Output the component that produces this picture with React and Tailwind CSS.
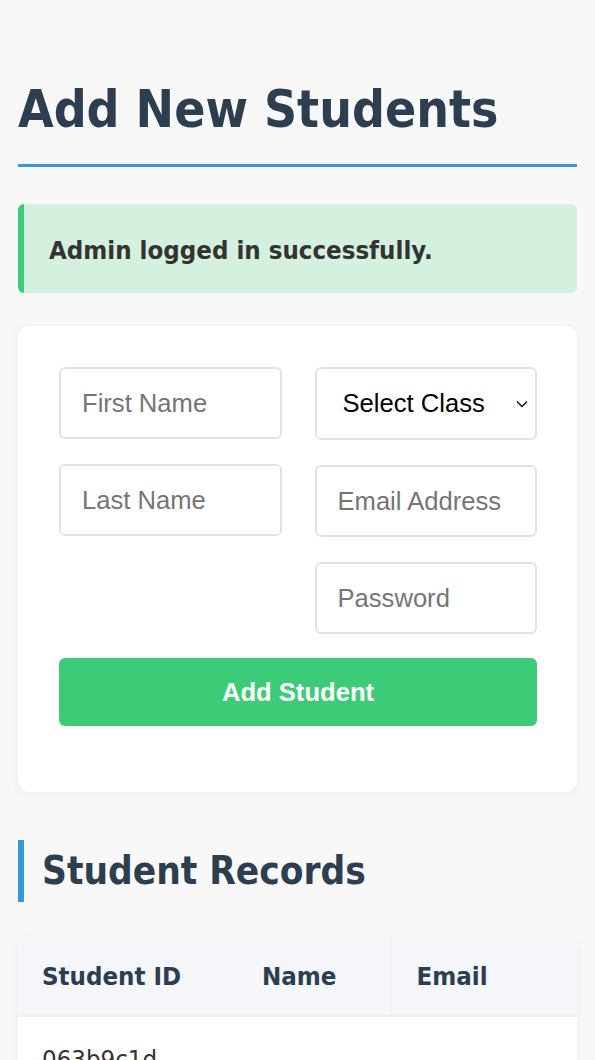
export default function App() {
  const head = "font-['DejaVu_Sans_Condensed','DejaVu_Sans',sans-serif]";
  const field =
    "w-full h-[72px] rounded-[6px] border-2 border-[#e3e3e3] bg-white pl-[21px] text-[25.6px] font-['Liberation_Sans',Arial,sans-serif] text-black placeholder:text-[#757575] outline-none";

  return (
    <div className={`min-h-screen bg-[#f8f8f8] px-[18px] pt-[79px] pb-10 ${head}`}>
      {/* 헤더 */}
      <h1 className="text-[51.2px] leading-[61px] font-bold text-[#2c3e50] pb-[24px] border-b-[3px] border-[#3498db]">
        Add New Students
      </h1>

      {/* 알림 */}
      <div className="mt-[37px] h-[89px] flex items-center pt-[3px] pl-[25px] rounded-[6px] border-l-[6px] border-[#3ccc78] bg-[#d4f0df]">
        <p className="text-[25.6px] font-bold text-[#333]">
          Admin logged in successfully.
        </p>
      </div>

      {/* 폼 */}
      <div className="mt-[33px] bg-white rounded-[12px] shadow-[0_2px_10px_rgba(0,0,0,0.06)] pt-[41px] pl-[41px] pr-[40px] pb-[66px]">
        <div className="grid grid-cols-2 gap-x-[33px] items-start">
          <div className="flex flex-col gap-[25px]">
            <input className={field} placeholder="First Name" />
            <input className={field} placeholder="Last Name" />
          </div>
          <div className="flex flex-col gap-[25px]">
            <div className="relative">
              <select className="w-full h-[73px] appearance-none rounded-[6px] border-2 border-[#e3e3e3] bg-white pl-[26px] text-[25.6px] font-['Liberation_Sans',Arial,sans-serif] text-black outline-none">
                <option>Select Class</option>
              </select>
              <svg
                className="absolute right-[9px] top-[33px] pointer-events-none"
                width="12"
                height="8"
                viewBox="0 0 12 8"
                fill="none"
                stroke="#111"
                strokeWidth="1.5"
              >
                <path d="M1 1.5l5 5 5-5" />
              </svg>
            </div>
            <input className={field} placeholder="Email Address" />
            <input className={field} placeholder="Password" type="password" />
          </div>
        </div>
        <button className="mt-[24px] w-full h-[68px] rounded-[6px] bg-[#3ccc78] text-white text-[25.6px] font-bold font-['Liberation_Sans',Arial,sans-serif]">
          Add Student
        </button>
      </div>

      {/* 학생 목록 */}
      <h2 className="mt-[48px] border-l-[6px] border-[#3498db] pl-[18px] text-[38.4px] leading-[62px] font-bold text-[#2c3e50]">
        Student Records
      </h2>

      <div className="mt-[35px] rounded-t-[12px] overflow-hidden bg-white shadow-[0_2px_10px_rgba(0,0,0,0.06)]">
        <table className="w-full border-collapse text-left text-[25.6px]">
          <thead>
            <tr className="h-[79px] bg-[#f4f6fa] border-b-2 border-[#eef0f3]">
              <th className="w-[220px] pl-[24px] font-bold text-[#2c3e50]">Student ID</th>
              <th className="w-[152px] pl-[24px] font-bold text-[#2c3e50]">Name</th>
              <th className="pl-[26px] font-bold text-[#2c3e50] border-l border-[#eceef2]">Email</th>
            </tr>
          </thead>
          <tbody>
            <tr>
              <td className="w-[220px] max-w-[220px] px-[24px] py-[24px] align-top text-[#333] leading-[36px]">
                063b9c1d-4f2a-4e8b-9c1d-7a3e5b2f8d41
              </td>
              <td className="pl-[24px] align-middle text-[#333]">Jane Doe</td>
              <td className="pl-[26px] align-middle text-[#333] break-all">jane@school.edu</td>
            </tr>
          </tbody>
        </table>
      </div>
    </div>
  );
}
